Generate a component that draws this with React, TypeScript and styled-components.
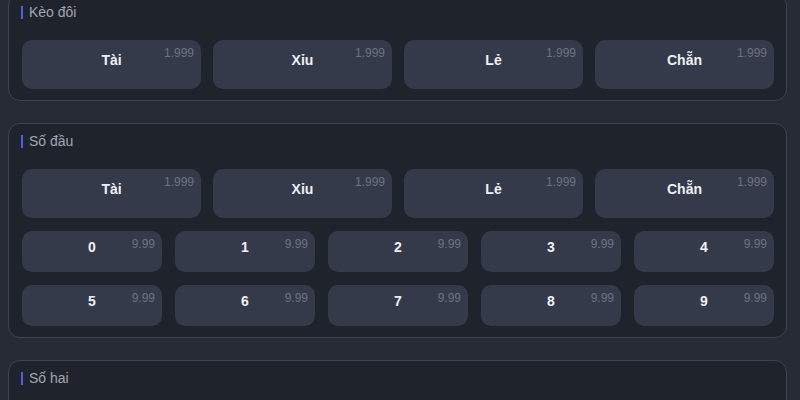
import React from 'react';
import styled, { createGlobalStyle } from 'styled-components';

const GlobalStyle = createGlobalStyle`
    html, body {
        margin: 0;
        padding: 0;
        overflow: hidden;
        background: #272b36;
        font-family: "Liberation Sans", Arial, sans-serif;
    }
`

const bigBets = ['Tài', 'Xỉu', 'Lẻ', 'Chẵn'];
const digits = ['0', '1', '2', '3', '4', '5', '6', '7', '8', '9'];

type SectionProps = {
    title: string;
    withDigits?: boolean;
};

const Section: React.FC<SectionProps> = ({ title, withDigits }) => (
    <Panel>
        <Title>{title}</Title>
        <Rows>
            <Grid cols={4} gap={12}>
                {bigBets.map((b) => (
                    <BetButton key={b} size="big">
                        <Label>{b}</Label>
                        <Odds>1.999</Odds>
                    </BetButton>
                ))}
            </Grid>
            {withDigits && (
                <Grid cols={5} gap={13}>
                    {digits.map((d) => (
                        <BetButton key={d} size="small">
                            <Label>{d}</Label>
                            <Odds>9.99</Odds>
                        </BetButton>
                    ))}
                </Grid>
            )}
        </Rows>
    </Panel>
)

const App: React.FC = () => {
    return (
        <>
            <GlobalStyle />
            <Page>
                <Section title="Kèo đôi" />
                <Section title="Số đầu" withDigits />
                <Section title="Số hai" withDigits />
            </Page>
        </>
    )
}

export default App;

const Page = styled.div`
    display: flex;
    flex-direction: column;
    gap: 22px;
    margin-top: -6px;
    padding: 0 13px 0 8px;
`

const Panel = styled.section`
    background: #1f232b;
    border: 1px solid #3e4351;
    border-radius: 12px;
    padding: 9px 12px 11px 13px;
`

const Title = styled.div`
    display: flex;
    align-items: center;
    height: 16px;
    margin-left: -1px;
    margin-bottom: 20px;
    font-size: 14px;
    line-height: 16px;
    color: #a2a6b2;
    &::before {
        content: '';
        width: 2px;
        height: 13px;
        background: #4f5fe6;
        margin-right: 6px;
    }
`

const Rows = styled.div`
    display: flex;
    flex-direction: column;
    gap: 13px;
`

const Grid = styled.div<{ cols: number; gap: number }>`
    display: grid;
    grid-template-columns: repeat(${(p) => p.cols}, 1fr);
    column-gap: ${(p) => p.gap}px;
    row-gap: 13px;
`

const BetButton = styled.div<{ size: 'big' | 'small' }>`
    position: relative;
    height: ${(p) => (p.size === 'big' ? 49 : 41)}px;
    box-sizing: border-box;
    padding-bottom: 9px;
    background: #353a4b;
    border-radius: 10px;
    display: flex;
    align-items: center;
    justify-content: center;
`

const Label = styled.span`
    font-size: 14px;
    font-weight: bold;
    color: #eef0f5;
`

const Odds = styled.span`
    position: absolute;
    top: 6px;
    right: 7px;
    font-size: 12px;
    line-height: 14px;
    color: #6d7181;
`
